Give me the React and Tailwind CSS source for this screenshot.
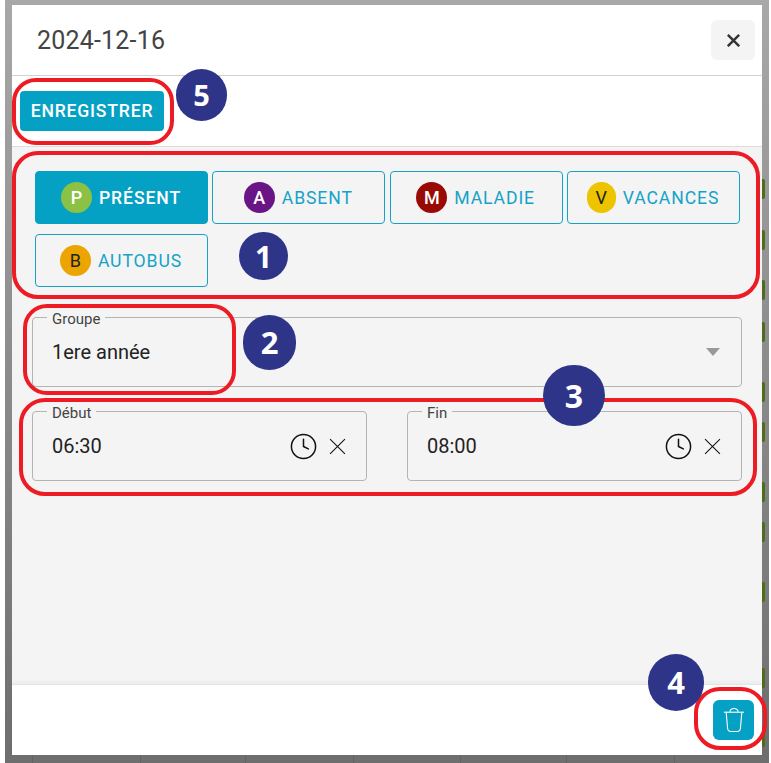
import React from "react";
import { Clock } from "lucide-react";

const statuts = [
  { code: "P", label: "PRÉSENT", pastille: "w-[31px] bg-[#8bc145] text-white font-medium", actif: true },
  { code: "A", label: "ABSENT", pastille: "w-[31px] bg-[#6a1585] text-white font-medium" },
  { code: "M", label: "MALADIE", pastille: "w-[31px] bg-[#990a05] text-white font-medium" },
  { code: "V", label: "VACANCES", pastille: "w-[29px] bg-[#ecc400] text-[#222] font-normal" },
  { code: "B", label: "AUTOBUS", pastille: "w-[31px] bg-[#eba400] text-[#222] font-normal" },
];

// traits verts du calendrier qui depassent derriere la fenetre
const traits = [179, 230, 280, 322, 382, 422, 482, 522, 582, 668, 727];
const colonnes = [32, 140, 245, 353, 460, 566, 674];

const Fermer = ({ className }) => (
  <svg viewBox="0 0 16 16" className={className} fill="none" stroke="currentColor">
    <path d="M1 1 L15 15 M15 1 L1 15" />
  </svg>
);

const Poubelle = () => (
  <svg viewBox="0 0 24 28" className="w-[22px] h-[26px]" fill="none" stroke="white" strokeWidth="1.2">
    <path d="M1 5.5 H23" />
    <path d="M7.5 5 C8 2 9.5 1.5 12 1.5 C14.5 1.5 16 2 16.5 5" />
    <path d="M3.5 6 L5 23 C5.2 25.5 6.5 26.5 8.5 26.5 H15.5 C17.5 26.5 18.8 25.5 19 23 L20.5 6" />
  </svg>
);

const Statut = ({ code, label, pastille, actif }) => (
  <button
    className={`h-[53px] rounded-[4px] border flex items-center justify-center gap-[7px] pr-[1px] text-[17.6px] tracking-[0.9px] ${
      actif ? "bg-[#05a1c4] border-[#05a1c4] text-white font-medium" : "border-[#14a3c7] text-[#14a3c7]"
    }`}
  >
    <span className={`h-[31px] rounded-full flex items-center justify-center text-[18px] tracking-normal ${pastille}`}>
      {code}
    </span>
    <span className="pt-[2px]">{label}</span>
  </button>
);

const Champ = ({ legende, className, children }) => (
  <fieldset className={`border border-[#b4b4b4] rounded-[4px] h-[77px] ${className || ""}`}>
    <legend className="ml-[14px] px-[5px] text-[15px] leading-[14px] text-[#444]">
      <span className="relative top-[2px]">{legende}</span>
    </legend>
    <div className="flex items-center h-[56px] pl-[19px] pr-[20px] text-[20px] text-[#222]">{children}</div>
  </fieldset>
);

const Heure = ({ legende, valeur }) => (
  <Champ legende={legende}>
    <span className="flex-1">{valeur}</span>
    <Clock size={29} strokeWidth={1.25} className="text-[#111]" />
    <Fermer className="w-[17px] h-[17px] ml-[11px] text-[#111]" />
  </Champ>
);

const Cadre = ({ className }) => (
  <div className={`absolute border-[4px] border-[#ed1c24] pointer-events-none ${className}`} />
);

const Numero = ({ className, children }) => (
  <div
    className={`absolute rounded-full bg-[#2e3589] text-white font-bold flex items-center justify-center ${className}`}
    style={{ fontFamily: '"Open Sans", sans-serif' }}
  >
    {children}
  </div>
);

const App = () => {
  return (
    <div className="relative w-[771px] h-[763px] bg-white overflow-hidden" style={{ fontFamily: "Roboto, sans-serif" }}>
      <div className="relative ml-[5px] mr-[2px] h-full pt-[5px] pl-[7px] bg-gradient-to-b from-[#a8a8a8] to-[#6e6e6e]">
        {colonnes.map((x) => (
          <div key={x} className="absolute bottom-0 h-[8px] w-px bg-[#626262]" style={{ left: x - 5 }} />
        ))}
        {traits.map((y) => (
          <div key={y} className="absolute w-[3px] h-[20px] rounded-r-[2px] bg-[#4f6b1c]" style={{ left: 757, top: y }} />
        ))}

        <div className="relative w-[750px] h-[750px] bg-white flex flex-col">
          {/* En-tete */}
          <header className="h-[71px] shrink-0 border-b border-[#d2d2d2] flex items-center justify-between pl-[25px] pr-[7px]">
            <h1 className="text-[25px] tracking-[0.2px] text-[#444] pt-[2px]">2024-12-16</h1>
            <button className="w-[44px] h-[40px] rounded-[6px] bg-[#f4f4f4] flex items-center justify-center">
              <Fermer className="w-[13px] h-[13px] text-[#333] [stroke-width:3]" />
            </button>
          </header>

          {/* Barre d'actions */}
          <div className="h-[71px] shrink-0 border-b border-[#dcdcdc] flex items-center pl-[8px]">
            <button className="w-[144px] h-[40px] rounded-[4px] bg-[#05a1c4] text-white text-[17.6px] tracking-[0.8px] font-medium">
              ENREGISTRER
            </button>
          </div>

          {/* Contenu */}
          <div className="flex-1 bg-[#f4f4f4] pt-[24px] px-[20px]">
            <div className="grid grid-cols-4 gap-x-[4.33px] gap-y-[10px] ml-[3px] mr-[2px]">
              {statuts.map((s) => (
                <Statut key={s.code} {...s} />
              ))}
            </div>

            <Champ legende="Groupe" className="mt-[23px]">
              <span className="flex-1">1ere année</span>
              <span className="w-0 h-0 mr-[1px] border-x-[7px] border-x-transparent border-t-[8px] border-t-[#999]" />
            </Champ>

            <div className="grid grid-cols-2 gap-x-[40px] mt-[17px]">
              <Heure legende="Début" valeur="06:30" />
              <Heure legende="Fin" valeur="08:00" />
            </div>
          </div>

          {/* Pied */}
          <footer className="h-[71px] shrink-0 border-t border-[#e4e4e4] shadow-[0_-2px_4px_rgba(0,0,0,0.04)] flex items-center justify-end pr-[8px]">
            <button className="w-[41px] h-[40px] rounded-[6px] bg-[#05a1c4] flex items-center justify-center">
              <Poubelle />
            </button>
          </footer>
        </div>
      </div>

      {/* Annotations */}
      <Cadre className="left-[12px] top-[78px] w-[162px] h-[67px] rounded-[24px]" />
      <Cadre className="left-[12px] top-[151px] w-[748px] h-[148px] rounded-[26px]" />
      <Cadre className="left-[23px] top-[304px] w-[213px] h-[91px] rounded-[24px]" />
      <Cadre className="left-[19px] top-[398px] w-[738px] h-[98px] rounded-[26px]" />
      <Cadre className="left-[694px] top-[687px] w-[73px] h-[63px] rounded-[26px]" />

      <Numero className="left-[176px] top-[69px] w-[51px] h-[52px] text-[29px]">5</Numero>
      <Numero className="left-[239px] top-[232px] w-[49px] h-[48px] text-[30px]">1</Numero>
      <Numero className="left-[243px] top-[315px] w-[53px] h-[55px] text-[31px]">2</Numero>
      <Numero className="left-[543px] top-[365px] w-[62px] h-[61px] text-[32px]">3</Numero>
      <Numero className="left-[648px] top-[654px] w-[56px] h-[57px] text-[31px]">4</Numero>
    </div>
  );
};

export default App;
